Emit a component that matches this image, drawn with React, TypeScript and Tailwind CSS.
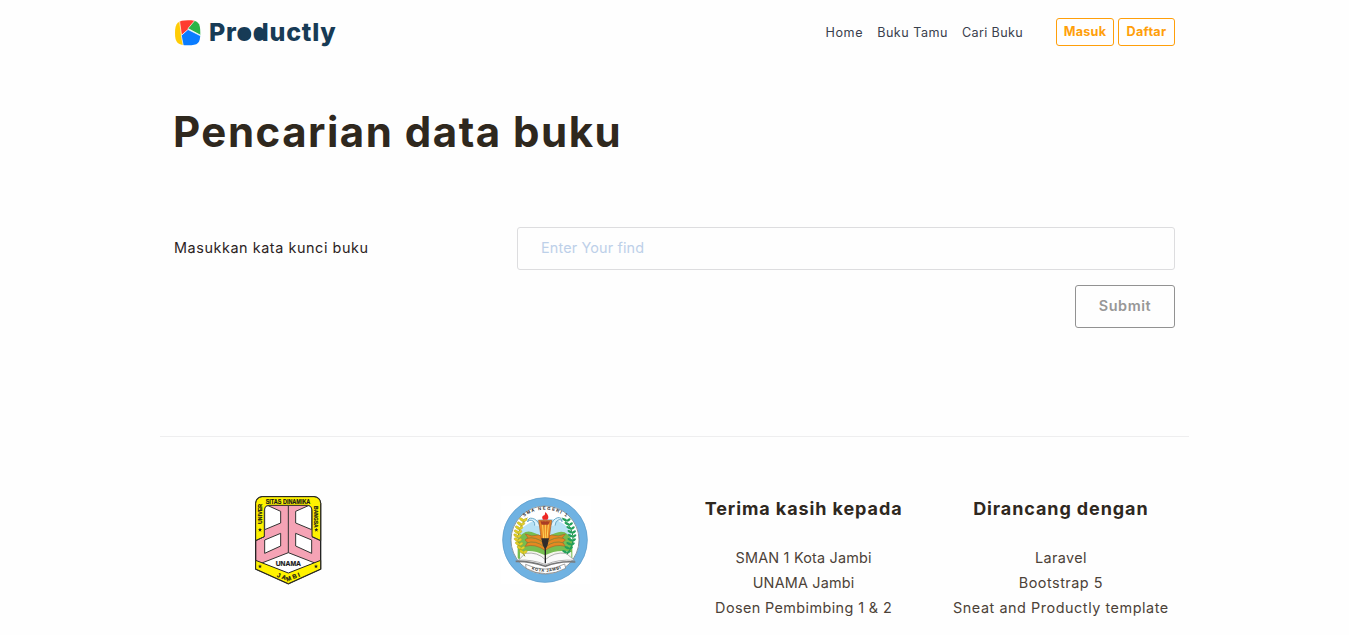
function ProductlyMark() {
  return (
    <svg className="h-[28px] w-[28px]" viewBox="0 0 28 28" aria-hidden="true">
      <defs>
        <clipPath id="mark">
          <path d="M14 1.3C24 1.3 26.3 3.5 26.3 14S24 26.3 14 26.3 1 24 1 14 4 1.3 14 1.3Z" />
        </clipPath>
      </defs>
      <g clipPath="url(#mark)" stroke="#fff" strokeWidth="0.7">
        <path d="M-2-2H6L10 28H-2Z" fill="#ffcc05" />
        <path d="M5-2H25L14 11 7.5 16.5Z" fill="#ff3b30" />
        <path d="M22 0L14 9.5 28 17V0Z" fill="#28b446" />
        <path d="M14 10.5L28 17.5V28H9.5L7.3 16.5Z" fill="#0a7cff" />
      </g>
    </svg>
  );
}

const stars = [
  [45, 119],
  [214, 119],
  [45, 229],
  [213, 229],
];

function UnamaShield() {
  return (
    <svg className="h-[100px] w-[86px]" viewBox="0 0 258 300" role="img">
      <defs>
        <path id="uLeft" d="M51 102V30" />
        <path id="uRight" d="M207 48V112" />
        <path id="uBase" d="M76 254L130 273 186 251" />
      </defs>
      <path d="M32 40Q34 22 52 20H207Q225 22 227 40V237L130 281 32 237Z" fill="#f5a3b5" stroke="#222" strokeWidth="4" />
      <path d="M32 152V40Q34 22 52 20H207Q225 22 227 40V152L201 140V62Q200 47 187 46H72Q59 47 58 62V140Z" fill="#fff200" stroke="#222" strokeWidth="3" />
      <g fill="#fff" stroke="#333" strokeWidth="3">
        <path d="M59 119V57Q60 47 69 47L107 64V99Z" />
        <path d="M200 119V57Q199 47 190 47L152 64V99Z" />
        <path d="M59 150L107 130V168L59 190Z" />
        <path d="M200 150L152 130V168L200 190Z" />
        <path d="M130 188L212 220 130 254 48 220Z" />
      </g>
      <path d="M130 47V188M32 152L58 140M227 152L201 140" stroke="#333" strokeWidth="3" />
      <path d="M32 211L130 249 227 211V237L130 281 32 237Z" fill="#fff200" stroke="#222" strokeWidth="3" />
      <g className="font-['Liberation_Sans'] font-bold" fill="#171717" stroke="#171717" strokeWidth="0.6">
        <text fontSize="16"><textPath href="#uLeft">UNIVER</textPath></text>
        <text x="62" y="41" fontSize="19" textLength="134" lengthAdjust="spacingAndGlyphs">SITAS DINAMIKA</text>
        <text fontSize="15"><textPath href="#uRight">BANGSA</textPath></text>
        <text x="92" y="227" fontSize="21" textLength="76" lengthAdjust="spacingAndGlyphs">UNAMA</text>
        <text fontSize="18" letterSpacing="5"><textPath href="#uBase" startOffset="20">JAMBI</textPath></text>
      </g>
      {stars.map(([x, y]) => (
        <path key={`${x}-${y}`} d="M0-6L1.6-2H6L2.6 1 4 6 0 3-4 6-2.6 1-6-2H-1.6Z" fill="#222" transform={`translate(${x} ${y})`} />
      ))}
    </svg>
  );
}

const leaves = [0, 1, 2, 3, 4, 5, 6, 7, 8];

function SmanSeal() {
  return (
    <svg className="h-[100px] w-[100px]" viewBox="0 0 300 300" role="img">
      <defs>
        <clipPath id="disc"><circle cx="150" cy="150" r="99" /></clipPath>
        <path id="sealTop" d="M85 82Q150 34 222 86" />
        <path id="sealBase" d="M102 234Q150 258 204 232" />
      </defs>
      <rect x="18" y="18" width="270" height="265" fill="#fff" />
      <circle cx="150" cy="150" r="115" fill="#fff" stroke="#6fb2e2" strokeWidth="25" />
      <circle cx="150" cy="150" r="127" fill="none" stroke="#5d9bc8" strokeWidth="2" />
      <circle cx="150" cy="150" r="102" fill="#fff" stroke="#526773" strokeWidth="2" />
      <g clipPath="url(#disc)">
        <path d="M72 125Q100 88 150 86T228 125V210H72Z" fill="#b7e2f5" />
        <path d="M68 150Q88 112 120 130Q150 145 180 130Q215 113 232 155V206H68Z" fill="#76bd50" />
        <path d="M75 187Q110 175 150 196Q190 175 229 187V210H75Z" fill="#f4f5ec" />
      </g>
      <path d="M119 107Q120 93 109 91Q98 88 98 96Q99 82 112 85Q127 88 135 108M180 107Q181 92 192 89Q202 88 201 95Q201 81 188 83Q174 87 167 107" fill="#d9f1fb" stroke="#69a9c9" strokeWidth="3" />
      <g fill="#e58821" stroke="#ac622a" strokeWidth="2">
        <path d="M91 132Q110 142 130 135L150 143V181Q120 160 91 169L98 157 90 150 99 143Z" />
        <path d="M211 132Q190 142 170 135L150 143V181Q180 160 211 169L203 157 211 150 202 143Z" />
      </g>
      <path d="M95 145Q122 138 148 160M94 159Q122 149 148 171M206 145Q178 138 152 160M206 159Q178 149 152 171" fill="none" stroke="#6b823a" strokeWidth="2" />
      <path d="M131 91H170L162 148H139Z" fill="#e88624" stroke="#a85522" strokeWidth="2" />
      <path d="M142 94L146 147M151 94V147M161 94L156 147" stroke="#ffd65a" strokeWidth="3" />
      <path d="M136 94H165L160 104H140Z" fill="#a93d25" />
      <path d="M151 66Q166 80 157 89H144Q137 78 149 75Z" fill="#ed2925" />
      <path d="M139 145H162L158 165 151 180 143 165Z" fill="#302c2b" />
      <path d="M70 211L91 190Q128 185 151 209Q177 185 213 190L239 211Q190 207 152 224Q108 207 70 211Z" fill="#fafafa" stroke="#888" strokeWidth="2" />
      <path d="M151 178V220" stroke="#222" strokeWidth="4" />
      <path d="M62 214Q108 213 151 229Q193 212 241 216" fill="none" stroke="#777" strokeWidth="5" />
      <path d="M92 223Q151 252 209 222L212 235Q151 267 93 235Z" fill="#fff" stroke="#777" strokeWidth="2" />
      <path d="M97 83Q45 139 90 199" fill="none" stroke="#8f9b20" strokeWidth="3" />
      <path d="M202 83Q258 137 216 193" fill="none" stroke="#27884b" strokeWidth="3" />
      {leaves.map((i) => {
        const y = 89 + i * 12;
        const bend = 25 * Math.sin(((i + 1) / 10) * Math.PI);
        return (
          <g key={i}>
            <ellipse cx={88 - bend} cy={y} rx="8" ry="4" fill="#e1cf22" stroke="#99951e" transform={`rotate(35 ${88 - bend} ${y})`} />
            <ellipse cx={98 - bend} cy={y + 1} rx="7" ry="4" fill="#e4d12b" stroke="#a5981b" transform={`rotate(-35 ${98 - bend} ${y + 1})`} />
            <ellipse cx={201 + bend} cy={y} rx="8" ry="3.5" fill="#23a05a" transform={`rotate(25 ${201 + bend} ${y})`} />
            <ellipse cx={213 + bend} cy={y + 1} rx="7" ry="3.5" fill="#23a05a" transform={`rotate(-35 ${213 + bend} ${y + 1})`} />
          </g>
        );
      })}
      <g className="font-['Liberation_Sans'] font-bold" fill="#222">
        <text fontSize="13" letterSpacing="4"><textPath href="#sealTop" startOffset="2">SMA NEGERI 1</textPath></text>
        <text fontSize="12" letterSpacing="2"><textPath href="#sealBase" startOffset="8">KOTA JAMBI</textPath></text>
      </g>
    </svg>
  );
}

export default function App() {
  return (
    <div className="h-[635px] overflow-hidden bg-[#fefefe] font-[Inter,sans-serif] text-[14.4px] text-[#2f281e]">
      <div className="mx-auto w-[1029px]">
        <header className="flex h-[65px] items-center justify-between px-[14px]">
          <a className="flex items-center gap-[7px]">
            <ProductlyMark />
            <span className="pb-[2px] text-[25px] leading-[32px] font-extrabold tracking-[0.75px] text-[#173b56]">
              Pr
              <span className="relative">
                o
                <i className="absolute top-[12px] left-[3px] h-[11px] w-[11px] rounded-full bg-[#173b56]" />
              </span>
              <span className="relative">
                d
                <i className="absolute top-[12px] left-[3px] h-[11px] w-[11px] rounded-full bg-[#173b56]" />
              </span>
              uctly
            </span>
          </a>
          <div className="flex items-center">
            <nav className="flex gap-[14px] pt-[2px] text-[12.6px] text-[#39404d]">
              <a className="tracking-[0.6px]">Home</a>
              <a className="tracking-[0.5px]">Buku Tamu</a>
              <a className="tracking-[0.35px]">Cari Buku</a>
            </nav>
            <div className="ml-[33px] flex gap-1 pb-px text-[12.6px] font-bold tracking-[0.3px] text-[#ff9f0a]">
              <button className="h-[28px] w-[58px] rounded-[3px] border border-[#ff9f0a]">Masuk</button>
              <button className="h-[28px] w-[57px] rounded-[3px] border border-[#ff9f0a]">Daftar</button>
            </div>
          </div>
        </header>
        <main className="h-[371px] px-[14px] pt-[37px]">
          <h1 className="-ml-px text-[42px] leading-[60px] font-bold tracking-[1.5px]">Pencarian data buku</h1>
          <form className="pt-[65px]">
            <div className="flex items-center">
              <label className="w-[343px] pb-[2px] tracking-[0.57px] text-[#2b221d]">Masukkan kata kunci buku</label>
              <input
                className="h-[43px] w-[658px] rounded-[3px] border border-[#dddddf] bg-transparent px-[23px] pb-[2px] tracking-[0.15px] outline-none placeholder:text-[#bdd0e9]"
                placeholder="Enter Your find"
              />
            </div>
            <div className="mt-[15px] flex justify-end">
              <button type="button" className="h-[43px] w-[100px] rounded-[3px] border border-[#929292] pb-[2px] font-semibold tracking-[0.6px] text-[#979797]">
                Submit
              </button>
            </div>
          </form>
        </main>
        <footer className="grid grid-cols-4 border-t border-[#eeeeef] pt-[53px] text-center">
          <div className="flex justify-center pr-[2px]">
            <UnamaShield />
          </div>
          <div className="flex justify-center pr-[2px]">
            <SmanSeal />
          </div>
          <div>
            <h2 className="mt-[6px] pl-px text-[18px] leading-[26px] font-bold tracking-[0.9px] whitespace-nowrap">Terima kasih kepada</h2>
            <ul className="mt-[23px] pl-px leading-[25px] text-[#4c4238]">
              <li className="tracking-[0.2px]">SMAN 1 Kota Jambi</li>
              <li className="tracking-[0.2px]">UNAMA Jambi</li>
              <li className="tracking-[0.4px]">Dosen Pembimbing 1 &amp; 2</li>
            </ul>
          </div>
          <div>
            <h2 className="mt-[6px] pl-px text-[18px] leading-[26px] font-bold tracking-[0.9px] whitespace-nowrap">Dirancang dengan</h2>
            <ul className="mt-[23px] pl-px leading-[25px] text-[#4c4238]">
              <li className="tracking-[0.4px]">Laravel</li>
              <li className="tracking-[0.5px]">Bootstrap 5</li>
              <li className="tracking-[0.55px] whitespace-nowrap">Sneat and Productly template</li>
            </ul>
          </div>
        </footer>
      </div>
    </div>
  );
}
